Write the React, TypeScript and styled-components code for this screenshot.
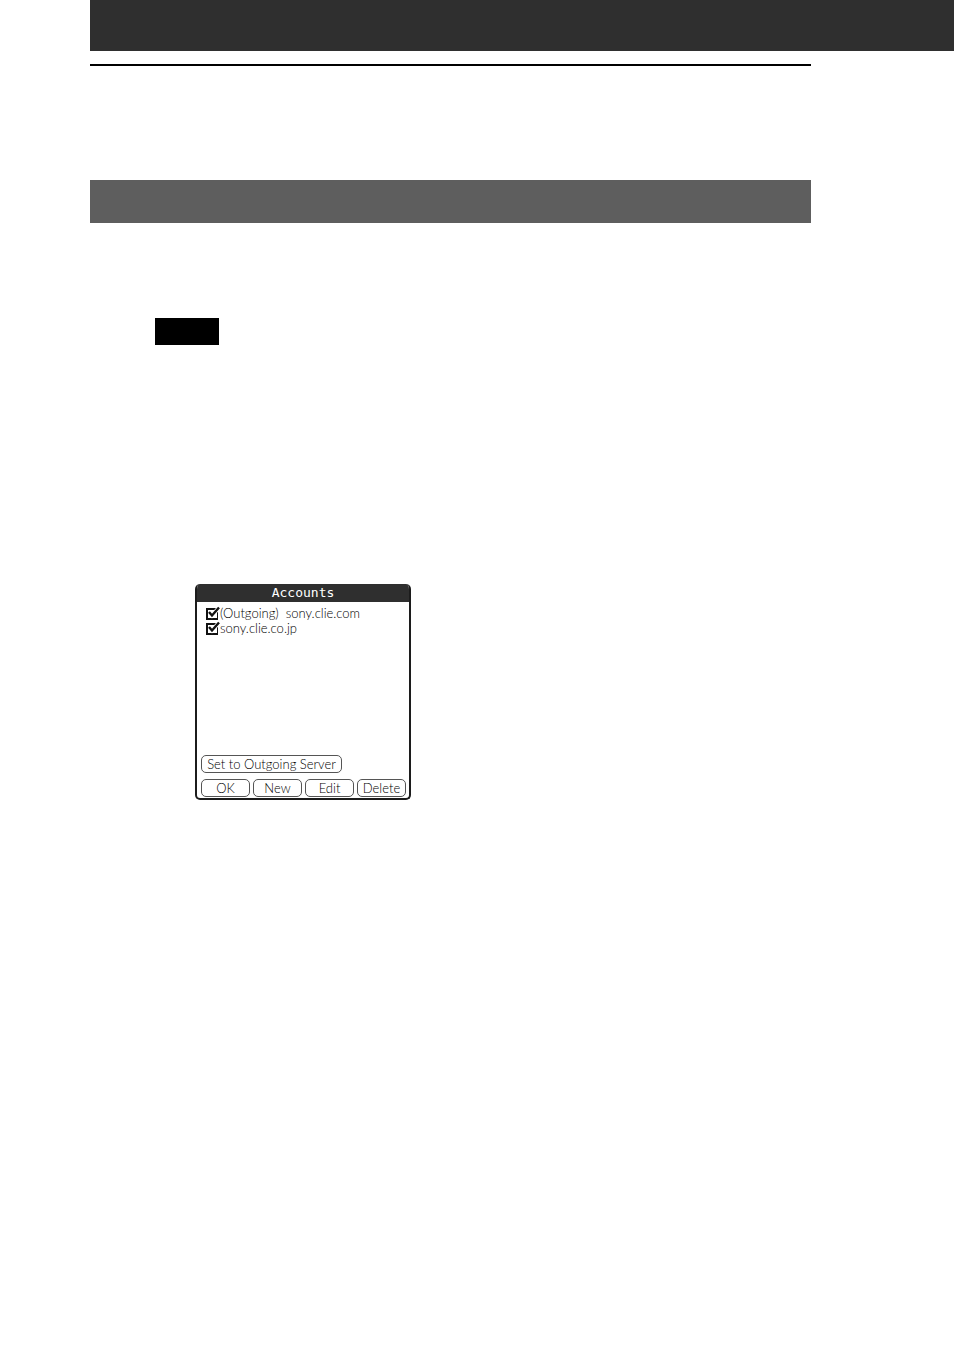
import React, { useState } from "react";
import styled, { createGlobalStyle } from "styled-components";

const GlobalStyle = createGlobalStyle`
  *, *::before, *::after { box-sizing: border-box; }
  body { margin: 0; background: #fff; }
`;

const Page = styled.div`
  padding-left: 90px;
  font-family: Lato, "Open Sans", sans-serif;
  font-size: 13px;
  font-weight: 300;
  color: #000;
`;

const Masthead = styled.header`
  height: 51px;
  background: #2f2f2f;
`;

const Content = styled.main`
  padding: 13px 143px 0 0;
`;

const Rule = styled.hr`
  height: 2px;
  margin: 0 0 114px;
  border: 0;
  background: #000;
`;

const SectionBand = styled.div`
  height: 43px;
  margin-bottom: 95px;
  background: #5e5e5e;
`;

const NoteBlock = styled.div`
  width: 64px;
  height: 27px;
  margin: 0 0 239px 65px;
  background: #000;
`;

const Dialog = styled.section`
  display: flex;
  flex-direction: column;
  width: 216px;
  margin: 0 0 80px 105px;
  border: 2px solid #1c1c1c;
  border-top: 0;
  border-radius: 5px;
  overflow: hidden;
`;

const DialogTitle = styled.h1`
  margin: 0;
  background: #2f2f2f;
  color: #fff;
  font-family: "DejaVu Sans Mono", monospace;
  font-size: 13px;
  font-weight: 400;
  line-height: 18px;
  text-align: center;
`;

const AccountList = styled.ul`
  min-height: 153px;
  margin: 0;
  padding: 4px 8px;
  list-style: none;
`;

const AccountLabel = styled.label`
  display: flex;
  align-items: center;
  height: 15px;
  line-height: 15px;
  white-space: pre;
`;

const TickBox = styled.span`
  display: grid;
  width: 15px;
  height: 15px;

  > * { grid-area: 1 / 1; }
`;

const TickInput = styled.input`
  appearance: none;
  width: 12px;
  height: 12px;
  margin: 2px 1px;
  border: 2px solid #111;
  border-right-width: 1px;
  background: #fff;
`;

const Tick = styled.svg`
  pointer-events: none;
  z-index: 1;
`;

const Actions = styled.div`
  display: grid;
  grid-template-columns: repeat(4, 1fr);
  gap: 6px 3px;
  padding: 0 3px 1px 4px;
`;

const Button = styled.button<{ $wide?: boolean }>`
  grid-column: ${({ $wide }) => ($wide ? "1 / -1" : "auto")};
  width: ${({ $wide }) => ($wide ? "141px" : "auto")};
  height: 18px;
  padding: 0;
  border: 1px solid #555;
  border-radius: 5px;
  background: #fff;
  color: inherit;
  font: inherit;
  line-height: 16px;
  white-space: nowrap;
`;

function Account({ name }: { name: string }) {
  const [checked, setChecked] = useState(true);
  return (
    <li>
      <AccountLabel>
        <TickBox>
          <TickInput
            type="checkbox"
            checked={checked}
            onChange={(e) => setChecked(e.target.checked)}
          />
          {checked && (
            <Tick width="15" height="15" viewBox="0 0 15 15" aria-hidden="true">
              <path d="M4 6 L7 9.5 L14 1.5" fill="none" stroke="#fff" strokeWidth="4" />
              <path d="M1 2h2v11h-2z" fill="#111" />
              <path d="M4 6 L7 9.5 L14 1.5" fill="none" stroke="#111" strokeWidth="2.4" />
            </Tick>
          )}
        </TickBox>
        {name}
      </AccountLabel>
    </li>
  );
}

export default function App() {
  return (
    <>
      <GlobalStyle />
      <Page>
        <Masthead />
        <Content>
          <Rule />
          <SectionBand />
          <NoteBlock />
          <Dialog aria-labelledby="accounts-title">
            <DialogTitle id="accounts-title">Accounts</DialogTitle>
            <AccountList>
              <Account name="(Outgoing)  sony.clie.com" />
              <Account name="sony.clie.co.jp" />
            </AccountList>
            <Actions>
              <Button type="button" $wide>Set to Outgoing Server</Button>
              <Button type="button">OK</Button>
              <Button type="button">New</Button>
              <Button type="button">Edit</Button>
              <Button type="button">Delete</Button>
            </Actions>
          </Dialog>
        </Content>
      </Page>
    </>
  );
}
